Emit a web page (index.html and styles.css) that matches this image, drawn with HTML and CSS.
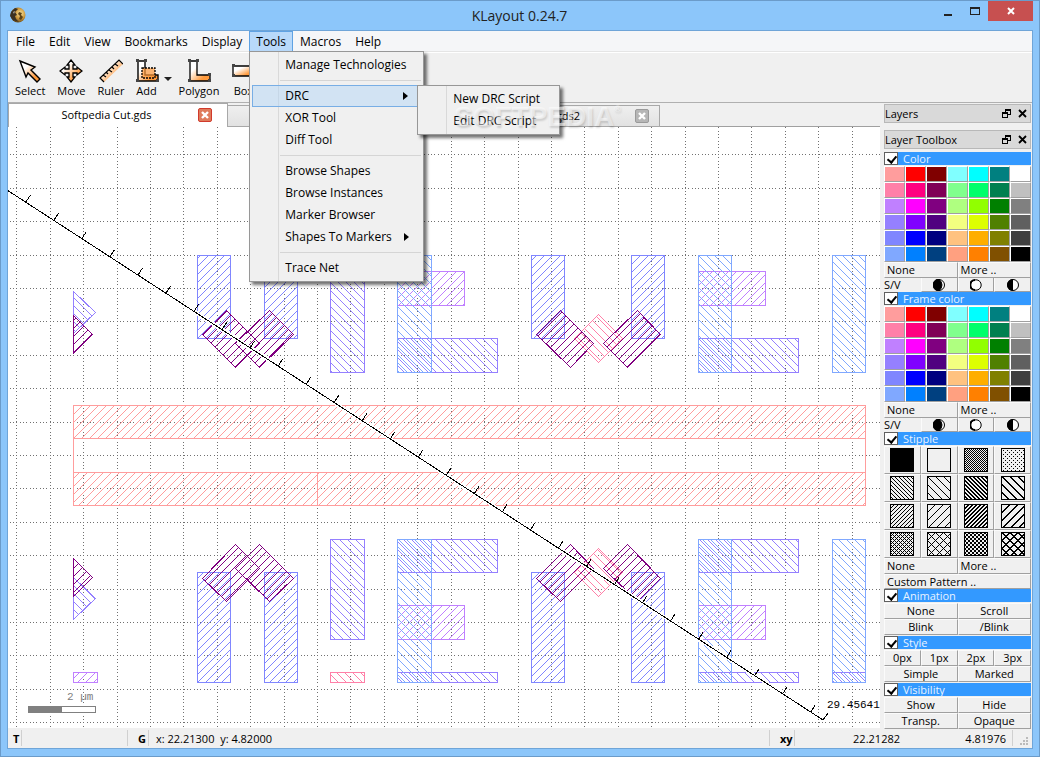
FILE: index.html
```html
<!DOCTYPE html>
<html lang="en">
<head>
<meta charset="utf-8">
<title>KLayout 0.24.7</title>
<link rel="stylesheet" href="styles.css">
</head>
<body>
<div class="window">
  <header class="titlebar">
    <svg class="app-icon" viewBox="0 0 16 16" width="16" height="16" aria-hidden="true">
      <defs><radialGradient id="gold" cx=".65" cy=".4" r=".7"><stop offset="0" stop-color="#ffe9a0"/><stop offset=".5" stop-color="#c9953a"/><stop offset="1" stop-color="#4a3312"/></radialGradient></defs>
      <circle cx="8" cy="8" r="7.5" fill="url(#gold)"/>
      <path d="M1 5L5 1L8 2L5 5L7 8L5 9L6 12L9 15L3 13L0 9Z" fill="#3b3122"/>
      <path d="M9 5L12 6L11 8L13 10L11 13L9 12L10 9L8 7Z" fill="#5d4318"/>
      <path d="M3 5L5 4L4 7Z" fill="#b8b4a8"/>
    </svg>
    <h1 class="title">KLayout 0.24.7</h1>
    <div class="window-buttons">
      <button class="win-btn" aria-label="Minimize"><svg width="10" height="10" viewBox="0 0 10 10"><path d="M1 8h8v2H1z" fill="#222"/></svg></button>
      <button class="win-btn win-max" aria-label="Maximize"><svg width="10" height="8" viewBox="0 0 10 8"><path d="M0 0h10v8H0zM1 2v5h8V2z" fill="#222" fill-rule="evenodd"/></svg></button>
      <button class="win-btn win-close" aria-label="Close"><svg width="8" height="8" viewBox="0 0 8 8"><path d="M1 1L7 7M7 1L1 7" stroke="#fff" stroke-width="2"/></svg></button>
    </div>
  </header>

  <div class="client">
    <nav class="menubar">
      <button class="menu-title">File</button>
      <button class="menu-title">Edit</button>
      <button class="menu-title">View</button>
      <button class="menu-title">Bookmarks</button>
      <button class="menu-title">Display</button>
      <div class="menu-anchor">
        <button class="menu-title is-open">Tools</button>
        <div class="menu" role="menu">
          <button class="menu-item" role="menuitem">Manage Technologies</button>
          <hr class="menu-sep">
          <div class="menu-anchor">
            <button class="menu-item is-active has-sub" role="menuitem">DRC</button>
            <div class="menu submenu" role="menu">
              <button class="menu-item" role="menuitem">New DRC Script</button>
              <button class="menu-item" role="menuitem">Edit DRC Script</button>
            </div>
          </div>
          <button class="menu-item" role="menuitem">XOR Tool</button>
          <button class="menu-item" role="menuitem">Diff Tool</button>
          <hr class="menu-sep">
          <button class="menu-item" role="menuitem">Browse Shapes</button>
          <button class="menu-item" role="menuitem">Browse Instances</button>
          <button class="menu-item" role="menuitem">Marker Browser</button>
          <button class="menu-item has-sub" role="menuitem">Shapes To Markers</button>
          <hr class="menu-sep">
          <button class="menu-item" role="menuitem">Trace Net</button>
        </div>
      </div>
      <button class="menu-title">Macros</button>
      <button class="menu-title">Help</button>
    </nav>

    <div class="toolbar">
      <svg class="defs" width="0" height="0" aria-hidden="true"><defs><linearGradient id="or" x1="0" y1="0" x2="1" y2="1"><stop offset=".3" stop-color="#fff"/><stop offset=".75" stop-color="#ff9a3c"/></linearGradient></defs></svg>
      <button class="tool"><svg width="24" height="24" viewBox="0 0 24 24"><path d="M2 2L17 8L13 11L22 20L19 23L10 14L8 18Z" fill="url(#or)" stroke="#000" stroke-width="1.4"/></svg>Select</button>
      <button class="tool"><svg width="24" height="24" viewBox="0 0 24 24"><path d="M12 1L16 6H14V10H18V8L23 12L18 16V14H14V18H16L12 23L8 18H10V14H6V16L1 12L6 8V10H10V6H8Z" fill="url(#or)" stroke="#000" stroke-width="1.3"/></svg>Move</button>
      <button class="tool"><svg width="24" height="24" viewBox="0 0 24 24"><path d="M20 1L24 5L5 23L1 19Z" fill="url(#or)"/><path d="M24 5L20 1L1 19L5 23M4 16l3 2M7 13l2 2M10 11l3 2M13 8l2 2M16 5l3 2" fill="none" stroke="#000" stroke-width="1.2"/></svg>Ruler</button>
      <button class="tool tool-add"><svg width="24" height="24" viewBox="0 0 24 24"><path d="M3 2H10V16H23V22H3Z" fill="url(#or)" stroke="#000" stroke-width="1.4"/><path d="M7 9H20V19H7Z" fill="#ff9a3c" fill-opacity=".7" stroke="#000" stroke-width="1.3" stroke-dasharray="2 1"/><path d="M1 0h3v3H1zM9 0h3v3H9zM1 20h3v3H1zM21 20h3v3h-3z" fill="#444"/></svg>Add</button>
      <button class="tool-arrow" aria-label="Add options"></button>
      <button class="tool"><svg width="24" height="24" viewBox="0 0 24 24"><path d="M3 2H10V16H23V22H3Z" fill="url(#or)" stroke="#000" stroke-width="1.3"/><path d="M1 0h3v3H1zM9 0h3v3H9zM1 20h3v3H1zM21 20h3v3h-3zM21 14h3v3h-3z" fill="#444"/></svg>Polygon</button>
      <button class="tool"><svg width="24" height="24" viewBox="0 0 24 24"><path d="M2 7H23V17H2Z" fill="url(#or)" stroke="#000" stroke-width="1.3"/><path d="M1 5h3v3H1zM1 15h3v3H1z" fill="#444"/></svg>Box</button>
    </div>

    <div class="workspace">
      <main class="view">
        <div class="tabs">
          <div class="tab is-current"><span class="tab-label">Softpedia Cut.gds</span><button class="tab-close" aria-label="Close tab"><svg width="8" height="8" viewBox="0 0 8 8"><path d="M1 1L7 7M7 1L1 7" stroke="#fff" stroke-width="2.4"/></svg></button></div>
          <div class="tab"></div>
          <div class="tab"><span class="tab-label tab-label-end">.gds2</span><button class="tab-close" aria-label="Close tab"><svg width="8" height="8" viewBox="0 0 8 8"><path d="M1 1L7 7M7 1L1 7" stroke="#fff" stroke-width="2.4"/></svg></button></div>
        </div>
        <div class="canvas">
          <svg class="drawing" width="100%" height="100%" role="img" aria-label="Layout view">
            <defs id="hatches"></defs>
            <g transform="translate(-8 -127)" shape-rendering="crispEdges">
              <g id="grid" class="grid"></g>
              <g id="shapes" class="shapes" transform="translate(.5 .5)"></g>
              <g id="ruler"></g>
              <rect x="28.500" y="706.500" width="67" height="6" fill="#fff" stroke="#808080"/>
              <rect x="28" y="706" width="34" height="7" fill="#808080"/>
              <text class="mono muted" x="67" y="700">2 µm</text>
              <text class="mono" x="827" y="708">29.45641</text>
            </g>
          </svg>
        </div>
      </main>

      <aside class="dock">
        <div class="dock-title"><span>Layers</span><button class="dock-btn" aria-label="Float"><svg width="9" height="9" viewBox="0 0 9 9"><path d="M3 0h6v6H6v3H0V3h3zM4 2v1h2v2h2V2zM1 5v3h4V5z" fill-rule="evenodd"/></svg></button><button class="dock-btn" aria-label="Close"><svg width="9" height="9" viewBox="0 0 9 9"><path d="M1 1L8 8M8 1L1 8" stroke="#000" stroke-width="1.8"/></svg></button></div>
        <div class="dock-title"><span>Layer Toolbox</span><button class="dock-btn" aria-label="Float"><svg width="9" height="9" viewBox="0 0 9 9"><path d="M3 0h6v6H6v3H0V3h3zM4 2v1h2v2h2V2zM1 5v3h4V5z" fill-rule="evenodd"/></svg></button><button class="dock-btn" aria-label="Close"><svg width="9" height="9" viewBox="0 0 9 9"><path d="M1 1L8 8M8 1L1 8" stroke="#000" stroke-width="1.8"/></svg></button></div>

        <div class="toolbox">
          <section>
            <label class="head"><input type="checkbox" checked><span>Color</span></label>
            <div class="swatches"></div>
            <div class="row cols2 start"><button>None</button><button>More ..</button></div>
            <div class="row sv"><span>S/V</span>
              <button aria-label="Darker"><svg width="12" height="12" viewBox="0 0 12 12"><circle cx="6" cy="6" r="5.500" fill="#fff" stroke="#000"/><path d="M6 0A6 6 0 0 0 6 12Q9 9 9 6T6 0" stroke="#000"/></svg></button>
              <button aria-label="Brighter"><svg width="12" height="12" viewBox="0 0 12 12"><circle cx="6" cy="6" r="5.200" fill="#fff" stroke="#000"/><path d="M5 1A5 5 0 0 0 5 11" fill="none" stroke="#000" stroke-width="1.800"/></svg></button>
              <button aria-label="Less saturated"><svg width="12" height="12" viewBox="0 0 12 12"><circle cx="6" cy="6" r="5.500" fill="#fff" stroke="#000"/><path d="M6 0A6 6 0 0 0 6 12Z"/></svg></button>
            </div>
          </section>
          <section>
            <label class="head"><input type="checkbox" checked><span>Frame color</span></label>
            <div class="swatches"></div>
            <div class="row cols2 start"><button>None</button><button>More ..</button></div>
            <div class="row sv"><span>S/V</span>
              <button aria-label="Darker"><svg width="12" height="12" viewBox="0 0 12 12"><circle cx="6" cy="6" r="5.500" fill="#fff" stroke="#000"/><path d="M6 0A6 6 0 0 0 6 12Q9 9 9 6T6 0" stroke="#000"/></svg></button>
              <button aria-label="Brighter"><svg width="12" height="12" viewBox="0 0 12 12"><circle cx="6" cy="6" r="5.200" fill="#fff" stroke="#000"/><path d="M5 1A5 5 0 0 0 5 11" fill="none" stroke="#000" stroke-width="1.800"/></svg></button>
              <button aria-label="Less saturated"><svg width="12" height="12" viewBox="0 0 12 12"><circle cx="6" cy="6" r="5.500" fill="#fff" stroke="#000"/><path d="M6 0A6 6 0 0 0 6 12Z"/></svg></button>
            </div>
          </section>
          <section>
            <label class="head"><input type="checkbox" checked><span>Stipple</span></label>
            <div class="stipples" id="stipples"></div>
            <div class="row cols2 start"><button>None</button><button>More ..</button></div>
            <div class="row start custom"><button>Custom Pattern ..</button></div>
          </section>
          <section class="spaced">
            <label class="head"><input type="checkbox" checked><span>Animation</span></label>
            <div class="row cols2"><button>None</button><button>Scroll</button></div>
            <div class="row cols2"><button>Blink</button><button>/Blink</button></div>
          </section>
          <section class="spaced">
            <label class="head"><input type="checkbox" checked><span>Style</span></label>
            <div class="row cols4"><button>0px</button><button>1px</button><button>2px</button><button>3px</button></div>
            <div class="row cols2"><button>Simple</button><button>Marked</button></div>
          </section>
          <section>
            <label class="head"><input type="checkbox" checked><span>Visibility</span></label>
            <div class="row cols2"><button>Show</button><button>Hide</button></div>
            <div class="row cols2"><button>Transp.</button><button>Opaque</button></div>
          </section>
        </div>
      </aside>
      <div class="watermark" aria-hidden="true">SOFTPEDIA<sup>®</sup></div>
    </div>

    <footer class="status">
      <b class="cell cell-t">T</b>
      <span class="cell cell-msg"></span>
      <b class="cell cell-g">G</b>
      <span class="cell-pos">x: 22.21300&nbsp; y: 4.82000</span>
      <b class="cell cell-xy">xy</b>
      <span class="num">22.21282</span>
      <span class="num cell cell-last">4.81976</span>
      <svg class="grip" width="9" height="9" viewBox="0 0 9 9"><path d="M6 0h2v2H6zM3 3h2v2H3zM6 3h2v2H6zM0 6h2v2H0zM3 6h2v2H3zM6 6h2v2H6z" fill="#bbb"/></svg>
    </footer>
  </div>
</div>
<script src="app.js"></script>
</body>
</html>
```
FILE: styles.css
```css
* { box-sizing: border-box; }
body { margin: 0; font: 12px/16px "Open Sans", "Noto Sans", sans-serif; color: #000; }
button { font: inherit; color: inherit; margin: 0; padding: 0; border: 0; background: none; text-align: left; }
svg { display: block; flex: none; }

.window { display: flex; flex-direction: column; height: 100vh; min-height: 757px; background: #8cc6fa; border: 1px solid #6b9bc9; padding: 0 6px 7px; }
.titlebar { display: flex; height: 29px; align-items: flex-start; position: relative; }
.app-icon { margin: 6px 0 0 3px; }
.title { flex: 1; margin: 0; padding-left: 79px; text-align: center; font-size: 14px; line-height: 29px; font-weight: 400; color: #222; }
.window-buttons { display: flex; }
.win-btn { width: 27px; height: 20px; display: flex; align-items: center; justify-content: center; }
.win-btn.win-close { width: 45px; background: #c75050; }

.client { flex: 1; display: flex; flex-direction: column; border: 1px solid #6fa5d8; background: #f0f0f0; min-height: 0; }
.menubar { display: flex; height: 22px; padding-left: 1px; background: #f5f6f8; border-bottom: 1px solid #fff; box-shadow: inset 0 -1px #e5e5e5; }
.menu-anchor { position: relative; }
.menu-title { height: 21px; padding: 0 7px; line-height: 20px; }
.menu-title.is-open { background: #b8d9fa; box-shadow: inset 0 0 0 1px #5fa2e3; }
.menu { position: absolute; z-index: 5; left: 0; top: 20px; width: 175px; padding: 2px; border: 1px solid #979797; background: linear-gradient(90deg, #f0f0f0 28px, #d9d9d9 28px, #d9d9d9 29px, #f0f0f0 29px); box-shadow: 3px 3px 3px rgba(0,0,0,.55); }
.menu-item { display: block; width: 100%; height: 22px; padding: 0 33px; line-height: 22px; white-space: nowrap; position: relative; }
.menu-item.is-active { background: rgba(179,213,245,.5); border: 1px solid #78aee5; padding: 0 32px; line-height: 20px; }
.has-sub::after { content: ""; position: absolute; right: 12px; top: 50%; margin-top: -4px; border: 4px solid transparent; border-left: 5px solid #000; border-right: 0; }
.menu-sep { margin: 4px 0 4px 28px; border: 0; height: 1px; background: #d5d5d5; }
.submenu { left: 165px; top: 0; width: 143px; }

.toolbar { display: flex; align-items: flex-start; height: 50px; padding: 6px 1px 0; border-bottom: 1px solid #b0b0b0; font-size: 11px; }
.defs { position: absolute; }
.tool { display: flex; flex-direction: column; align-items: center; padding: 0 6px; }
.tool-add { padding: 0 4px; }
.tool-arrow { border: 4px solid transparent; border-top-color: #222; border-bottom: 0; margin: 18px 1px 0; }

.workspace { flex: 1; display: flex; min-height: 0; position: relative; }
.view { flex: 1; display: flex; flex-direction: column; min-width: 0; }
.tabs { display: flex; align-items: flex-end; height: 24px; font-size: 11px; }
.tabs::after { content: ""; flex: 1; align-self: stretch; border-bottom: 1px solid #a0a0a0; }
.tab { display: flex; align-items: center; width: 216px; height: 22px; padding: 0 10px 0 0; border: 1px solid #a8a8a8; border-left: 0; background: linear-gradient(#efefef, #e2e2e2); }
.tab.is-current { width: 220px; height: 24px; padding: 0 15px 2px 6px; background: #fff; border-color: #a8a8a8; border-bottom: 0; border-left: 1px solid #a8a8a8; }
.tab-label { flex: 1; text-align: center; }
.tab-label-end { text-align: right; padding-right: 55px; }
.tab-close { display: flex; align-items: center; justify-content: center; width: 14px; height: 14px; border: 1px solid #9a9a9a; border-radius: 2px; background: #b6b6b6; }
.is-current .tab-close { border-color: #d13a2c; background: #df7b5c; }
.canvas { flex: 1; min-height: 0; background: #fff; overflow: hidden; }

.grid { stroke: #707070; stroke-dasharray: 1 2.343; }
.shapes { stroke-width: 1; }
.halo { stroke: #fff; stroke-width: 4; }
.line { stroke: #000; fill: none; }
.mono { font: 11px "Liberation Mono", monospace; }
.muted { fill: #808080; }

.dock { width: 152px; padding: 1px 1px 0 4px; font-size: 11px; line-height: 14px; }
.dock-title { display: flex; align-items: center; height: 19px; margin-bottom: 7px; border: 1px solid #b8b8b8; background: #d9d9d9; }
.dock-title span { flex: 1; }
.dock-btn { margin-left: 1px; width: 15px; height: 15px; display: grid; place-items: center; }
.dock-title + .toolbox { margin-top: -4px; }
.head { display: flex; height: 14px; color: #e8f3ff; line-height: 13px; }
.head input { appearance: none; margin: 0; flex: none; width: 14px; height: 13px; border: 1px solid #606060; background: #fff; position: relative; }
.head input:checked::after { content: ""; position: absolute; left: 4px; top: 1px; width: 4px; height: 7px; border: solid #000; border-width: 0 2px 2px 0; transform: rotate(40deg); }
.head span { flex: 1; height: 13px; padding-left: 5px; background: #39f; }
.swatches { display: grid; grid-template-columns: repeat(7, 1fr); }
.swatch { height: 16px; border: 1px solid #fff; border-right-color: #a0a0a0; border-bottom-color: #a0a0a0; }
.row { display: grid; grid-auto-flow: column; grid-auto-columns: 1fr; height: 16px; }
.row button { text-align: center; border: 1px solid #fbfbfb; border-right-color: #a0a0a0; border-bottom-color: #a0a0a0; }
.row.start button { text-align: left; padding-left: 2px; }
.row.sv { height: 14px; line-height: 13px; }
.row.sv button { display: grid; place-items: center; border-width: 0 1px 1px; }
.row.custom { height: 15px; line-height: 13px; }
.spaced { margin-bottom: 1px; }
.stipples { display: grid; grid-template-columns: repeat(4, 1fr); }
.stipple { height: 28px; display: grid; place-items: center; border: 1px solid #fbfbfb; border-right-color: #a0a0a0; border-bottom-color: #a0a0a0; }

.watermark { position: absolute; z-index: 9; left: 446px; top: -2px; font: bold 28px/32px "Liberation Sans", sans-serif; color: rgba(255,255,255,.5); text-shadow: 1px 2px 2px rgba(0,0,0,.14); pointer-events: none; }
.watermark sup { font-size: 9px; line-height: 9px; vertical-align: 14px; }

.status { display: flex; align-items: center; height: 20px; padding-right: 3px; font-size: 11px; line-height: 18px; }
.cell { border-right: 1px solid #d0d0d0; height: 16px; }
.cell-t { padding-left: 5px; width: 14px; }
.cell-msg { width: 106px; }
.cell-g { padding-left: 10px; width: 21px; }
.cell-pos { flex: 1; padding-left: 7px; height: 16px; border-right: 1px solid #d0d0d0; }
.cell-xy { width: 25px; padding-left: 10px; }
.num { width: 105px; text-align: right; height: 16px; }
.cell-last { width: 113px; padding-right: 6px; }
.grip { margin: 6px 0 0 7px; }
```
FILE: app.js
```js
const NS = "http://www.w3.org/2000/svg";
const add = (parent, name, attrs) => {
  const el = document.createElementNS(NS, name);
  for (const key in attrs) el.setAttribute(key, attrs[key]);
  parent.append(el);
  return el;
};

// Dotted grid
const grid = document.getElementById("grid");
const columns = [16,50,83,117,150,183,217,250,284,317,350,384,417,451,484,518,551,584,618,651,685,718,751,785,818,852];
const rows = [154,188,221,255,288,321,355,388,422,455,488,522,555,589,622,655,689,722];
columns.forEach(x => add(grid, "path", { d: `M${x + .5} 127.3V729` }));
rows.forEach(y => add(grid, "path", { d: `M9.7 ${y + .5}H880` }));

// Layer styles: colour, hatch direction and horizontal phase
const styles = {
  salmon: ["#ff9d9d", "/", 0],
  blue: ["#8086ff", "/", 0],
  lilac: ["#c080ff", "/", 0],
  violet: ["#9580ff", "\\", 0],
  sky: ["#80a8ff", "\\", 3],
  pink: ["#ff80a8", "\\", 0],
  plum: ["#800080", "/", 2]
};
const hatches = document.getElementById("hatches");
for (const name in styles) {
  const [fill, direction, phase] = styles[name];
  const tile = add(hatches, "pattern", { id: name, x: -.5, y: -.5, width: 8, height: 8, patternUnits: "userSpaceOnUse" });
  let d = "";
  for (let i = 0; i < 8; i++) {
    const x = ((direction === "/" ? 7 - i : i) + phase) % 8;
    d += `M${x} ${i}h1v1h-1z`;
  }
  add(tile, "path", { d, fill, "shape-rendering": "crispEdges" });
}

// Layout polygons, one list for each layer
const rect = (x1, y1, x2, y2) => `${x1},${y1} ${x2},${y1} ${x2},${y2} ${x1},${y2}`;
const layers = {
  salmon: [rect(73,405,865,438), rect(73,472,865,505)],
  blue: [197,264,531,631].flatMap(x => [rect(x,255,x+33,338), rect(x,572,x+33,682)]),
  lilac: [397,698].flatMap(x => [rect(x,271,x+67,305), rect(x,605,x+67,639)]).concat(rect(73,672,97,682)),
  violet: [397,698].flatMap(x => [rect(x,338,x+100,372), rect(x,539,x+100,572), rect(x,672,x+100,682)])
    .concat(rect(330,255,364,372), rect(330,539,364,639), rect(832,672,865,682), "73,291 95,312 73,333", "73,577 95,598 73,619"),
  sky: [rect(397,255,431,372), rect(397,539,431,682), rect(698,255,731,372), rect(698,539,731,682), rect(832,255,865,372), rect(832,539,865,682)],
  pink: [rect(330,672,364,682), "598,314 622,338 598,362 574,338", "598,548 622,572 598,596 574,572"],
  plum: ["73,315 92,334 73,353", "73,558 92,577 73,596",
    "226,310 259,343 235,367 202,334", "269,310 293,334 259,367 235,343",
    "560,310 593,343 570,367 536,334", "637,310 660,334 627,367 603,343",
    "235,544 259,568 226,601 202,578", "259,544 293,578 269,601 235,568",
    "570,544 593,568 560,601 536,578", "627,544 660,578 637,601 603,568"]
};
const shapes = document.getElementById("shapes");
for (const layer in layers)
  layers[layer].forEach(points => add(shapes, "polygon", { points, stroke: styles[layer][0], fill: `url(#${layer})` }));
add(shapes, "path", { d: "M73 438V472M865 438V472M317 472V505", stroke: styles.salmon[0] });

// Ruler with a tick at each unit
const ruler = document.getElementById("ruler");
let d = "M7 190L823 720L828 713";
for (let i = -3; i < 26; i++) {
  const x = 110 + i * 28.03, y = 256.7 + i * 18.21;
  d += `M${x} ${y}l4.5 -7`;
}
add(ruler, "path", { d: "M7 190L823 720", class: "halo" });
add(ruler, "path", { d, class: "line" });

// Palette
const palette = ("ff9d9d ff0000 800000 80ffff 00ffff 008080 ffffff " +
  "ff80a8 ff0080 800057 80ff8d 00ff6b 008050 c0c0c0 " +
  "c080ff ff00ff 800080 afff80 91ff00 008000 808080 " +
  "9580ff 8000ff 500080 f3ff80 ddff00 508000 606060 " +
  "8086ff 0000ff 000080 ffc280 ffae00 808000 404040 " +
  "80a8ff 0080ff 004080 ffa080 ff8000 805000 000000").split(" ");
document.querySelectorAll(".swatches").forEach(box => palette.forEach(color => {
  const b = document.createElement("button");
  b.className = "swatch";
  b.ariaLabel = "#" + color;
  b.style.background = "#" + color;
  box.append(b);
}));

// Stipple patterns: a test for each pixel that is set
const mod = (a, n) => ((a % n) + n) % n;
const tests = [
  () => true, () => false,
  (x, y) => mod(x + y, 2) === 0,
  (x, y) => mod(y, 2) === 0 && mod(x + y, 4) === 0,
  (x, y) => mod(x - y, 4) === 0, (x, y) => mod(x - y, 8) === 0,
  (x, y) => mod(x - y, 4) < 2, (x, y) => mod(x - y, 8) < 2,
  (x, y) => mod(x + y, 4) === 0, (x, y) => mod(x + y, 8) === 0,
  (x, y) => mod(x + y, 4) < 2, (x, y) => mod(x + y, 8) < 2,
  (x, y) => mod(x - y, 4) === 0 || mod(x + y, 4) === 0,
  (x, y) => mod(x - y, 8) === 0 || mod(x + y, 8) === 0,
  (x, y) => (mod(x, 4) < 2) === (mod(y, 4) < 2),
  (x, y) => mod(x - y, 8) < 2 || mod(x + y, 8) < 2
];
const stipples = document.getElementById("stipples");
tests.forEach((test, i) => {
  const b = document.createElement("button");
  b.className = "stipple";
  b.ariaLabel = "Stipple " + i;
  const svg = add(b, "svg", { width: 24, height: 24, "shape-rendering": "crispEdges" });
  let p = "M0 0h24v1H0zM0 23h24v1H0zM0 0h1v24H0zM23 0h1v24h-1z";
  for (let y = 1; y < 23; y++) for (let x = 1; x < 23; x++) if (test(x, y)) p += `M${x} ${y}h1v1h-1z`;
  add(svg, "path", { d: p });
  stipples.append(b);
});
```
